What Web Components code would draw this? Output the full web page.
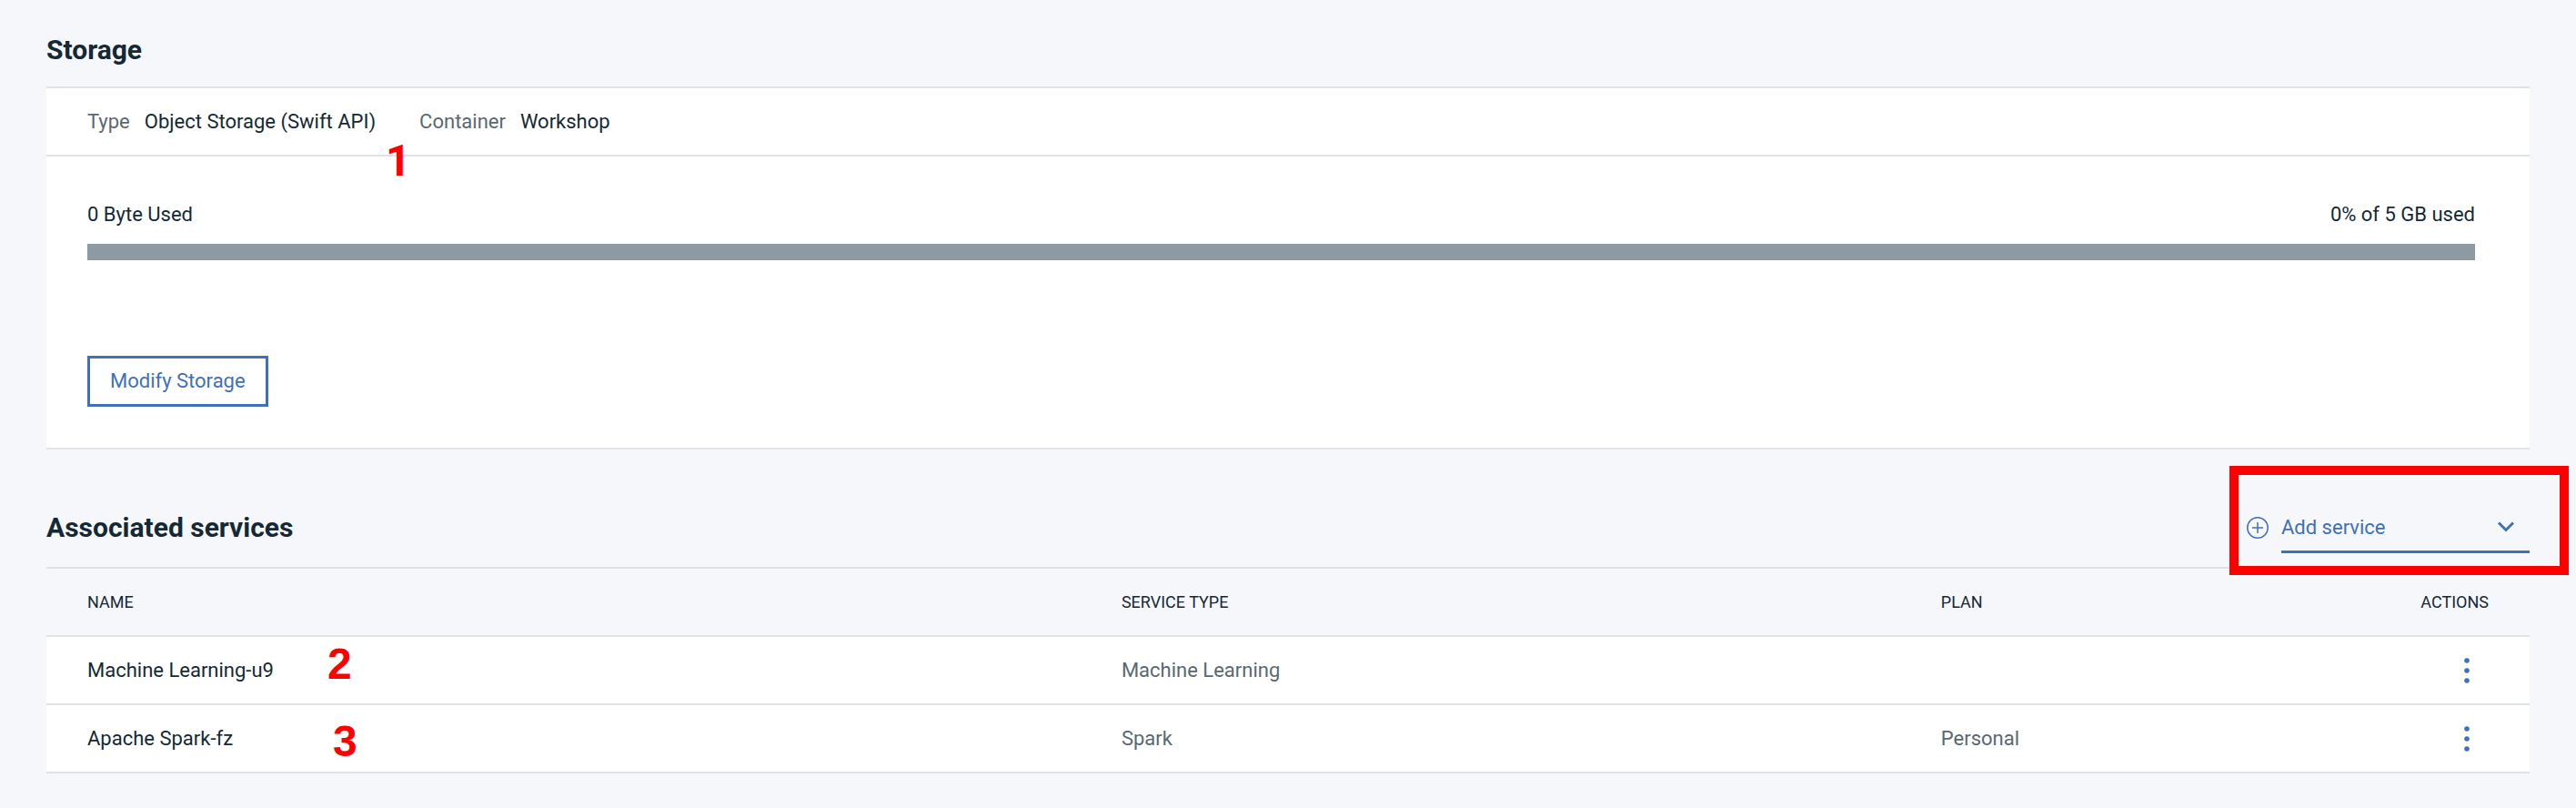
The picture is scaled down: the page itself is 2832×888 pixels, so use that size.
<!DOCTYPE html>
<html lang="en">
<head>
<meta charset="utf-8">
<title>Project settings</title>
<style>
:root{--ink:#152935;--muted:#5a6872;--line:#dfe3e6;--blue:#4070b7;--page:#f5f7fb;--mark:#f00}
body{margin:0;background:var(--page);color:var(--ink);font:22px/32px Roboto,"Noto Sans",sans-serif}
</style>
</head>
<body>
<project-settings></project-settings>
<script>
function define(name, html){
  const template=document.createElement('template');
  template.innerHTML=html;
  customElements.define(name,class extends HTMLElement{
    constructor(){
      super();
      this.attachShadow({mode:'open'}).append(template.content.cloneNode(true));
    }
  });
}

define('mark-number',`
<style>
:host{position:absolute;color:var(--mark);font:bold 48px/48px "Liberation Sans",Arial,sans-serif;pointer-events:none}
:host([plain]){font-family:Roboto,sans-serif}
</style><slot></slot>`);

define('section-heading',`
<style>
:host{display:flex;align-items:center;justify-content:space-between}
h2{margin:0;font-size:30px;line-height:40px;font-weight:700}
</style><h2><slot></slot></h2><slot name="action"></slot>`);

define('meta-pair',`
<style>
:host{display:flex;gap:16px}
.label{color:var(--muted)}
</style><span class="label"><slot name="label"></slot></span><span><slot></slot></span>`);

define('usage-bar',`
<style>
:host{display:block}
.labels{display:flex;justify-content:space-between;margin-bottom:16px}
.track{height:18px;background:#8d9aa4}
</style>
<div class="labels"><span><slot name="used"></slot></span><span><slot name="share"></slot></span></div>
<div class="track" role="progressbar" aria-label="Storage used" aria-valuemin="0" aria-valuemax="100" aria-valuenow="0"></div>`);

define('outline-button',`
<style>
:host{display:inline-block}
button{height:56px;padding:0 22px;border:3px solid var(--blue);background:transparent;color:var(--blue);font:inherit;display:block}
</style><button type="button"><slot></slot></button>`);

define('storage-card',`
<style>
:host{display:block;background:#fff;border:solid var(--line);border-width:2px 0}
.meta{position:relative;display:flex;gap:48px;align-items:center;height:73px;padding:0 45px;border-bottom:2px solid var(--line)}
.body{padding:48px 60px 45px 45px}
outline-button{margin-top:105px;vertical-align:top}
mark-number{left:373px;top:56px}
</style>
<div class="meta">
<meta-pair><span slot="label">Type</span>Object Storage (Swift API)</meta-pair>
<meta-pair><span slot="label">Container</span>Workshop</meta-pair>
<mark-number plain>1</mark-number>
</div>
<div class="body">
<usage-bar><span slot="used">0 Byte Used</span><span slot="share">0% of 5 GB used</span></usage-bar>
<outline-button>Modify Storage</outline-button>
</div>`);

define('service-picker',`
<style>
:host{position:relative;display:flex;align-items:center;gap:14px;color:var(--blue)}
label{display:flex}
.field{display:grid;align-items:center;width:273px;border-bottom:3px solid var(--blue)}
select,.chevron{grid-area:1/1}
select{box-sizing:border-box;appearance:none;width:100%;height:54px;padding:4px 0 0;border:0;border-radius:0;background:transparent;color:inherit;font:inherit}
.chevron{justify-self:end;margin-right:16px;pointer-events:none}
.frame{position:absolute;inset:-39px -43px -24px -19px;border:10px solid var(--mark);pointer-events:none}
svg{display:block;fill:none;stroke:currentColor}
</style>
<label for="service" aria-label="Add service"><svg width="24" height="24" viewBox="0 0 24 24" stroke-width="1.5"><circle cx="12" cy="12" r="11.2"/><path d="M12 6v12M6 12h12"/></svg></label>
<div class="field">
<select id="service"><option>Add service</option></select>
<svg class="chevron" width="20" height="14" viewBox="0 0 20 14" stroke-width="3"><path d="M2 3.5l8 8 8-8"/></svg>
</div>
<div class="frame"></div>`);

define('row-menu',`
<style>
:host{display:inline-block;vertical-align:middle}
button{display:grid;place-items:center;width:48px;height:48px;padding:0;border:0;background:transparent;color:var(--blue)}
</style><button type="button" aria-label="Row actions"><svg width="6" height="28" viewBox="0 0 6 28" fill="currentColor"><circle cx="3" cy="3" r="2.8"/><circle cx="3" cy="14" r="2.8"/><circle cx="3" cy="25" r="2.8"/></svg></button>`);

define('services-table',`
<style>
:host{display:block;border-top:2px solid var(--line)}
table{width:100%;border-collapse:separate;border-spacing:0;table-layout:fixed}
th,td{position:relative;box-sizing:border-box;height:75px;padding:0 8px;border-bottom:2px solid var(--line);text-align:left;font-weight:400;white-space:nowrap}
thead th{font-size:18px;line-height:24px}
th:first-child,td:first-child{padding-left:45px}
th:last-child,td:last-child{padding-right:45px;text-align:right}
tbody{background:#fff}
tbody td{color:var(--muted)}
tbody td:first-child{color:var(--ink)}
.name{width:43%}.type{width:33%}
mark-number{left:309px;top:6px}
tr:last-child mark-number{left:315px;top:16px}
</style>
<table>
<thead><tr><th class="name" scope="col">NAME</th><th class="type" scope="col">SERVICE TYPE</th><th scope="col">PLAN</th><th scope="col">ACTIONS</th></tr></thead>
<tbody>
<tr><td>Machine Learning-u9<mark-number>2</mark-number></td><td>Machine Learning</td><td></td><td><row-menu></row-menu></td></tr>
<tr><td>Apache Spark-fz<mark-number>3</mark-number></td><td>Spark</td><td>Personal</td><td><row-menu></row-menu></td></tr>
</tbody>
</table>`);

define('project-settings',`
<style>
:host{display:block;padding:35px 51px 38px}
storage-card{margin-top:20px}
.services{margin-top:57px}
services-table{margin-top:15px}
</style>
<section><section-heading>Storage</section-heading><storage-card></storage-card></section>
<section class="services">
<section-heading>Associated services<service-picker slot="action"></service-picker></section-heading>
<services-table></services-table>
</section>`);
</script>
</body>
</html>
